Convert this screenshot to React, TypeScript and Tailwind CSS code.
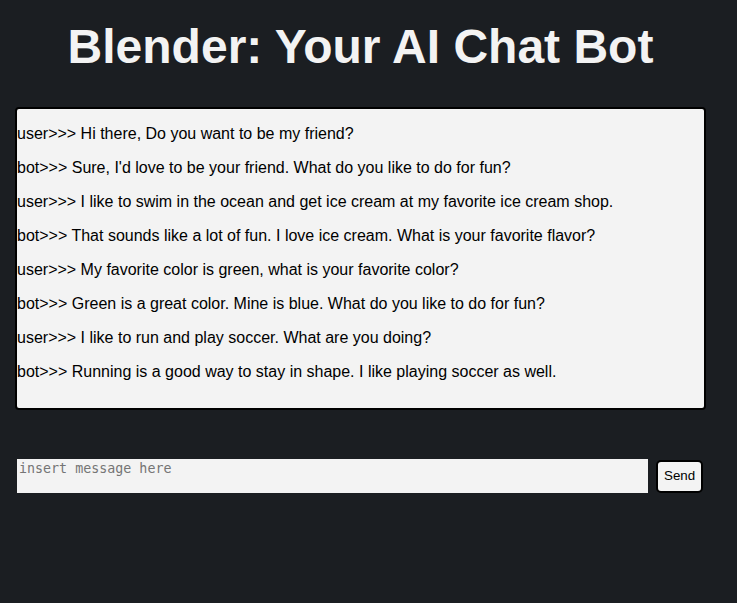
import React from "react";

const messages = [
  "user>>> Hi there, Do you want to be my friend?",
  "bot>>> Sure, I'd love to be your friend. What do you like to do for fun?",
  "user>>> I like to swim in the ocean and get ice cream at my favorite ice cream shop.",
  "bot>>> That sounds like a lot of fun. I love ice cream. What is your favorite flavor?",
  "user>>> My favorite color is green, what is your favorite color?",
  "bot>>> Green is a great color. Mine is blue. What do you like to do for fun?",
  "user>>> I like to run and play soccer. What are you doing?",
  "bot>>> Running is a good way to stay in shape. I like playing soccer as well.",
];

export default function App() {
  return (
    <div className="min-h-screen w-full bg-[#1b1e22] font-['Liberation_Sans',Arial,sans-serif]">
      <div className="mx-[15px] w-[691px]">
        <h1 className="pt-[19px] text-center text-[48px] font-bold leading-[56px] text-[#f3f3f3]">
          Blender: Your AI Chat Bot
        </h1>
        <div className="mt-[32px] h-[303px] rounded-[4px] border-2 border-black bg-[#f3f3f3]">
          {messages.map((m, i) => (
            <p key={i} className="my-4 text-[16px] leading-[18px] text-black">
              {m}
            </p>
          ))}
        </div>
        <div className="mt-[49px] flex items-center">
          <textarea
            placeholder="insert message here"
            className="ml-[2px] h-[34px] w-[631px] resize-none border-0 bg-[#f3f3f3] p-[2px] font-['DejaVu_Sans_Mono',monospace] text-[13.33px] leading-[16px] text-black outline-none placeholder:text-[#757575]"
          />
          <button className="ml-[8px] h-[33px] rounded-[5px] border-2 border-black bg-[#f3f3f3] px-[6px] text-[13.33px] text-black">
            Send
          </button>
        </div>
      </div>
    </div>
  );
}
